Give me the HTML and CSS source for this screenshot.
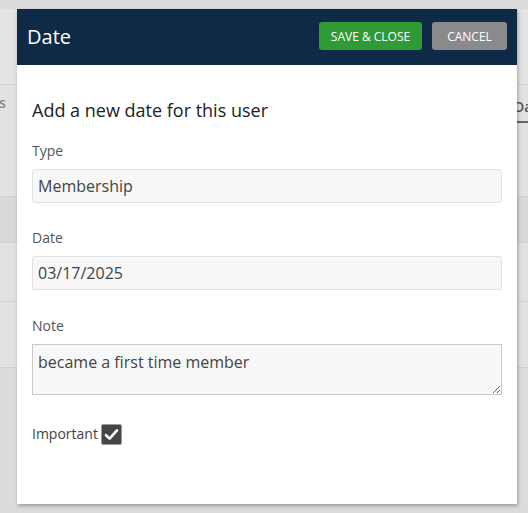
FILE: index.html
```html
<!DOCTYPE html>
<html>
<head>
<meta charset="utf-8">
<link rel="stylesheet" href="styles.css">
</head>
<body>
<div class="page">
  <div class="bar-top"></div>
  <div class="row row-a"></div>
  <div class="row row-b">
    <span class="frag-left">s</span>
    <span class="frag-right">Da</span>
  </div>
  <div class="row row-c"></div>
  <div class="row row-d"></div>
  <div class="row row-e"></div>
</div>

<div class="modal">
  <div class="modal-head">
    <div class="modal-title">Date</div>
    <div class="actions">
      <button class="btn btn-save">SAVE &amp; CLOSE</button>
      <button class="btn btn-cancel">CANCEL</button>
    </div>
  </div>
  <div class="modal-body">
    <h3 class="heading">Add a new date for this user</h3>
    <div class="field">
      <label class="label">Type</label>
      <input class="input" type="text" value="Membership" readonly>
    </div>
    <div class="field">
      <label class="label">Date</label>
      <input class="input" type="text" value="03/17/2025" readonly>
    </div>
    <div class="field">
      <label class="label">Note</label>
      <textarea class="textarea" readonly>became a first time member</textarea>
    </div>
    <div class="check-row">
      <span class="check-label">Important</span>
      <span class="checkbox">
        <svg width="15" height="13" viewBox="0 0 15 13"><path d="M2 7.2 L5.6 10.6 L13 2.4" fill="none" stroke="#fff" stroke-width="2.6" stroke-linecap="round" stroke-linejoin="round"/></svg>
      </span>
    </div>
  </div>
</div>
</body>
</html>
```

FILE: styles.css
```css
* { box-sizing: border-box; }
html, body { margin: 0; padding: 0; }
body {
  width: 528px;
  height: 513px;
  overflow: hidden;
  background: #dcdcdc;
  font-family: "Open Sans", "Noto Sans", sans-serif;
  position: relative;
}
.page { display: flex; flex-direction: column; }
.bar-top { height: 9px; background: #dcdcdc; }
.row { border-bottom: 1px solid #d2d2d2; position: relative; }
.row-a { height: 76px; background: #e4e4e4; }
.row-b { height: 112px; background: #e2e2e2; display: flex; justify-content: space-between; align-items: flex-start; overflow: hidden; }
.row-c { height: 46px; background: #d9d9d9; }
.row-d { height: 59px; background: #e2e2e2; }
.row-e { height: 66px; background: #e2e2e2; }

.frag-left {
  font-size: 14px;
  color: #8a8a8a;
  font-weight: 600;
  margin-top: 8px;
  margin-left: -1px;
  line-height: 20px;
}
.frag-right {
  font-size: 14px;
  color: #555;
  font-weight: 600;
  margin-top: 12px;
  line-height: 20px;
  width: 16px;
  padding-left: 2px;
  padding-bottom: 4px;
  border-bottom: 2px solid #666;
  overflow: hidden;
  white-space: nowrap;
}

.modal {
  position: absolute;
  left: 17px;
  top: 9px;
  width: 500px;
  height: 495px;
  background: #fff;
  box-shadow: 1px 2px 4px rgba(0,0,0,0.3);
  display: flex;
  flex-direction: column;
}
.modal-head {
  height: 56px;
  background: #0f2a47;
  display: flex;
  align-items: center;
  justify-content: space-between;
  padding: 0 10px;
}
.modal-title {
  color: #fff;
  font-size: 20px;
  line-height: 28px;
  margin-top: -1px;
}
.actions { display: flex; gap: 10px; margin-top: -2px; }
.btn {
  height: 28px;
  border: none;
  border-radius: 3px;
  color: #fff;
  font-family: "Open Sans", "Noto Sans", sans-serif;
  font-size: 12px;
  font-weight: 500;
  padding: 0;
  text-align: center;
}
.btn-save { width: 103px; background: #2f9a36; }
.btn-cancel { width: 75px; background: #8a8a8d; }

.modal-body { padding: 33px 15px 0 15px; }
.heading {
  margin: 0;
  font-size: 18px;
  font-weight: 400;
  line-height: 24px;
  color: #222;
}
.field { display: flex; flex-direction: column; margin-top: 19px; }
.field + .field { margin-top: 25px; }
.field + .field + .field { margin-top: 26px; }
.label {
  font-size: 14px;
  line-height: 20px;
  color: #555;
  margin-bottom: 8px;
}
.input {
  height: 34px;
  width: 470px;
  border: 1px solid #e2e2e2;
  border-radius: 3px;
  background: #f7f7f7;
  font-family: "Open Sans", "Noto Sans", sans-serif;
  font-size: 16px;
  color: #444;
  padding: 0 5px;
  outline: none;
}
.textarea {
  height: 51px;
  width: 470px;
  border: 1px solid #c9c9c9;
  border-radius: 0;
  background: #f8f8f8;
  font-family: "Open Sans", "Noto Sans", sans-serif;
  font-size: 16px;
  line-height: 22px;
  color: #444;
  padding: 6px 5px;
  outline: none;
  resize: both;
  display: block;
}
.check-row {
  display: flex;
  align-items: center;
  gap: 3px;
  margin-top: 27px;
}
.check-label { font-size: 14px; line-height: 20px; color: #444; }
.checkbox {
  width: 21px;
  height: 21px;
  background: #464646;
  border: 1px solid #9a9a9a;
  border-radius: 2px;
  display: flex;
  align-items: center;
  justify-content: center;
  margin-top: 2px;
}
```
